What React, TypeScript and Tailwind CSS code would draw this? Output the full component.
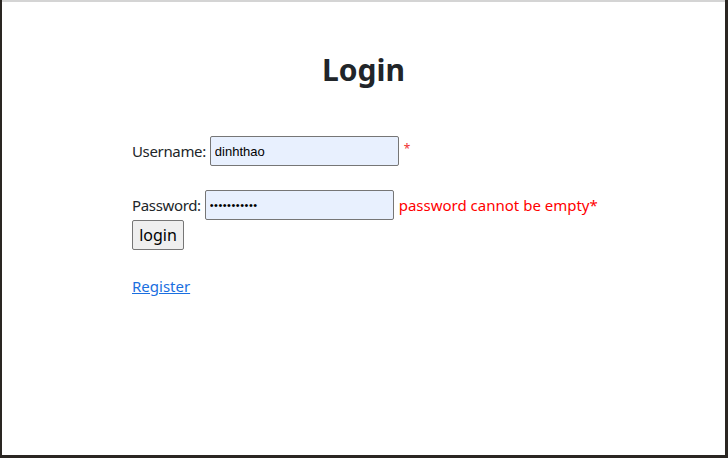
import { useState, type FC } from "react";

const App: FC = () => {
  const [username, setUsername] = useState("dinhthao");
  const [password, setPassword] = useState("12345678901");

  return (
    <div className="flex h-[458px] w-[728px] bg-[#2a2622] pb-[3px] pl-[2px] pr-[3px]">
      <div className="flex flex-1 flex-col border-t-[2px] border-[#d4d4d4] bg-white font-['Noto_Sans',sans-serif] text-[15px] text-[#212529]">
        <h1 className="mt-[49px] text-center text-[30px] font-bold leading-[38px]">
          Login
        </h1>

        <form
          className="ml-[130px] mt-[47px] flex flex-col"
          onSubmit={(e) => e.preventDefault()}
        >
          <div className="flex h-[30px] items-center">
            <label htmlFor="username" className="mr-[4px] leading-none tracking-[-0.35px]">
              Username:
            </label>
            <input
              id="username"
              value={username}
              onChange={(e) => setUsername(e.target.value)}
              className="h-[30px] w-[189px] rounded-[2px] border border-[#767676] bg-[#e8f0fe] px-[4px] font-['Liberation_Sans',sans-serif] text-[13px] text-black outline-none"
            />
            <span className="mb-[4px] ml-[5px] text-[12px] text-[#f03030]">*</span>
          </div>

          <div className="mt-[24px] flex h-[30px] items-center">
            <label htmlFor="password" className="mr-[4px] leading-none tracking-[-0.35px]">
              Password:
            </label>
            <input
              id="password"
              type="password"
              value={password}
              onChange={(e) => setPassword(e.target.value)}
              className="h-[30px] w-[189px] rounded-[2px] border border-[#767676] bg-[#e8f0fe] px-[4px] font-['Liberation_Sans',sans-serif] text-[11px] tracking-[0.5px] text-black outline-none"
            />
            <span className="ml-[5px] text-[#ff0000]">
              password cannot be empty*
            </span>
          </div>

          <div>
            <button
              type="submit"
              className="h-[30px] w-[52px] rounded-[2px] border border-[#767676] bg-[#efefef] text-[16px] leading-none text-black"
            >
              login
            </button>
          </div>

          <div className="mt-[25px]">
            <a href="#" className="text-[#1a6fe0] underline">
              Register
            </a>
          </div>
        </form>
      </div>
    </div>
  );
};

export default App;
